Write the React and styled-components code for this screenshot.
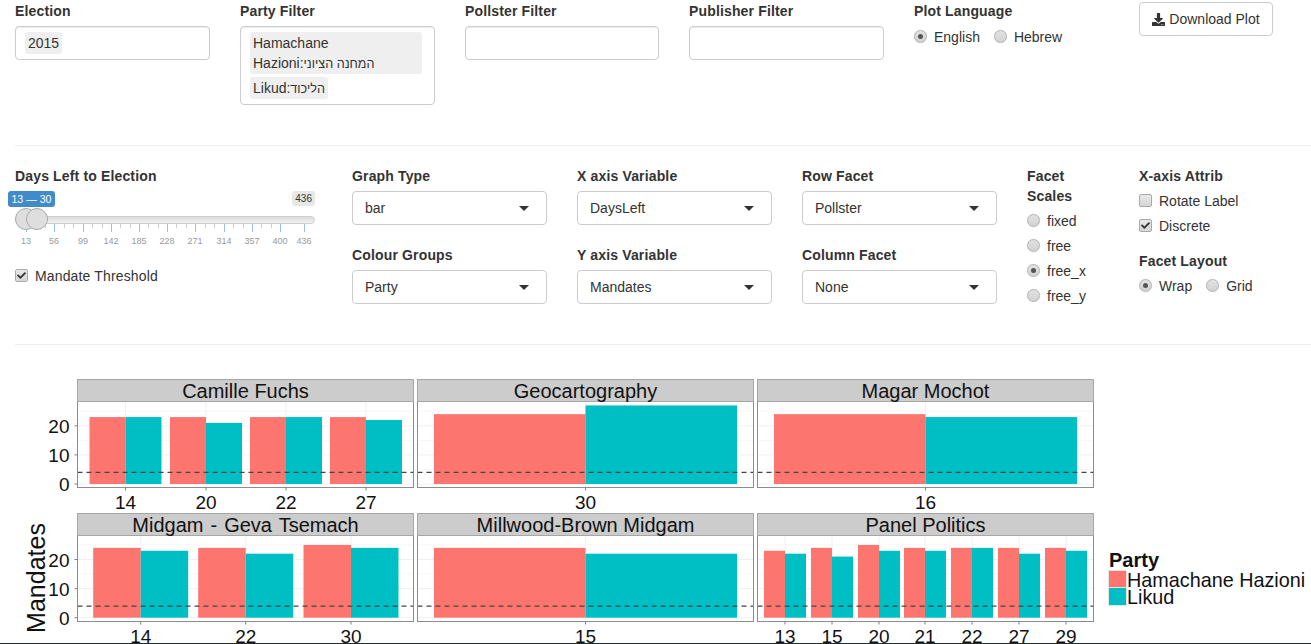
import styled, { createGlobalStyle } from "styled-components";
import { FaCheck, FaDownload } from "react-icons/fa";

const GlobalStyle = createGlobalStyle`
  html, body {
    margin: 0;
    padding: 0;
    height: 644px;
    overflow: hidden;
    background: #fff;
  }
  body {
    font-family: "Liberation Sans", Arial, "Noto Sans", sans-serif;
    font-size: 14px;
    line-height: 20px;
    color: #333;
  }
`;

const Page = styled.div`
  width: 1311px;
  height: 644px;
  overflow: hidden;
`;

const Section = styled.section`
  display: flex;
  margin-left: 15px;
  height: ${(p) => p.$height}px;
  padding-top: ${(p) => p.$top}px;
  box-sizing: border-box;
  border-bottom: 1px solid #eee;
`;

const Column = styled.div`
  flex: none;
  width: ${(p) => p.$width}px;
  display: flex;
  flex-direction: column;
`;

const Label = styled.div`
  font-weight: 700;
  font-size: 14px;
  line-height: 20px;
  letter-spacing: 0.15px;
  margin-top: ${(p) => p.$mt || 0}px;
  margin-bottom: ${(p) => p.$mb ?? 5}px;
  width: ${(p) => (p.$narrow ? "60px" : "auto")};
`;

const SelectizeBox = styled.div`
  width: ${(p) => p.$width || 195}px;
  min-height: 34px;
  box-sizing: border-box;
  padding: 5px 12px 5px 9px;
  border: 1px solid #ccc;
  border-radius: 4px;
  box-shadow: inset 0 1px 1px rgba(0, 0, 0, 0.075);
  display: flex;
  flex-direction: column;
  align-items: flex-start;
  gap: 3px;
`;

const Token = styled.div`
  background: #efefef;
  border-radius: 3px;
  padding: 1px 3px;
  line-height: 20px;
  color: #333;
  box-sizing: border-box;
  width: ${(p) => (p.$wide ? "172px" : "auto")};
`;

const Hebrew = styled.span`
  font-size: 12.6px;
  line-height: 1;
`;

const ChoiceRow = styled.div`
  display: flex;
  align-items: center;
  gap: 14px;
  height: 25px;
`;

const Choice = styled.label`
  display: flex;
  align-items: center;
  gap: 7px;
`;

const Radio = styled.span`
  width: 13px;
  height: 13px;
  box-sizing: border-box;
  border-radius: 50%;
  border: 1px solid #b5b5b5;
  background: linear-gradient(#e2e2e2, #d2d2d2);
  box-shadow: 0 0 1px rgba(0, 0, 0, 0.2);
  display: flex;
  align-items: center;
  justify-content: center;
  flex: none;
  &::after {
    content: "";
    width: 5px;
    height: 5px;
    border-radius: 50%;
    background: ${(p) => (p.$on ? "#555" : "transparent")};
  }
`;

const Check = styled.span`
  width: 13px;
  height: 13px;
  box-sizing: border-box;
  border-radius: 2px;
  border: 1px solid #aaa;
  background: linear-gradient(#e8e8e8, #d6d6d6);
  display: flex;
  align-items: center;
  justify-content: center;
  color: #333;
  font-size: 9px;
  flex: none;
`;

const DownloadButton = styled.button`
  width: 134px;
  height: 34px;
  margin-top: 1px;
  padding: 0;
  background: #fff;
  border: 1px solid #ccc;
  border-radius: 4px;
  font: inherit;
  color: #333;
  display: flex;
  align-items: center;
  justify-content: center;
  gap: 4px;
`;

const SelectBox = styled.div`
  width: 195px;
  height: 34px;
  box-sizing: border-box;
  padding: 0 12px;
  border: 1px solid #ccc;
  border-radius: 4px;
  display: flex;
  align-items: center;
  justify-content: space-between;
  margin-bottom: ${(p) => p.$mb || 0}px;
  &::after {
    content: "";
    width: 0;
    height: 0;
    border-left: 5px solid transparent;
    border-right: 5px solid transparent;
    border-top: 5px solid #333;
    margin-right: 5px;
  }
`;

const SliderWrap = styled.div`
  position: relative;
  width: 300px;
  height: 79px;
  margin-top: -1px;
`;

const FromTo = styled.span`
  position: absolute;
  left: -7px;
  top: 1px;
  width: 47px;
  height: 16px;
  text-align: center;
  background: #428bca;
  color: #fff;
  border-radius: 3px;
  font-size: 10.6px;
  line-height: 16px;
`;

const MaxTag = styled.span`
  position: absolute;
  right: 0;
  top: 1px;
  height: 15px;
  padding: 0 3px;
  background: #e8e8e8;
  color: #333;
  border-radius: 3px;
  font-size: 10px;
  line-height: 15px;
`;

const Track = styled.div`
  position: absolute;
  left: 0;
  top: 26px;
  width: 300px;
  height: 8px;
  box-sizing: border-box;
  border: 1px solid #cfcfcf;
  border-radius: 4px;
  background: linear-gradient(#dcdcdc, #f0f0f0);
`;

const Handle = styled.span`
  position: absolute;
  left: ${(p) => p.$left}px;
  top: 18px;
  width: 22px;
  height: 22px;
  box-sizing: border-box;
  border-radius: 50%;
  border: 1px solid #ababab;
  background: #dedede;
`;

const Tick = styled.span`
  position: absolute;
  top: 34px;
  width: 1px;
  height: ${(p) => (p.$major ? 8 : 4)}px;
  background: ${(p) => (p.$major ? "#9cc2e2" : "#ccc")};
`;

const TickText = styled.span`
  position: absolute;
  top: 45px;
  transform: translateX(-50%);
  font-size: 9px;
  line-height: 12px;
  color: #999;
`;

const ThresholdRow = styled(ChoiceRow)`
  position: absolute;
  left: 0;
  top: 73px;
  letter-spacing: 0.15px;
`;

const PlotBox = styled.div`
  margin-top: 25px;
  height: 274px;
  position: relative;
`;

const PlotSvg = styled.svg`
  display: block;
`;

const RED = "#fc766f";
const TEAL = "#00bfc4";
const colX = [77.5, 417.5, 757.5];
const panelW = 336;
const rows = [
  { stripTop: 379.5, panelBottom: 487.5, zero: 484 },
  { stripTop: 513.5, panelBottom: 621.5, zero: 617.7 },
];
const unit = 2.91;

const panels = [
  { title: "Camille Fuchs", col: 0, row: 0, half: 36, bars: [[125.5, "14", 23, 23], [206, "20", 23, 21], [286, "22", 23, 23], [366, "27", 23, 22]] },
  { title: "Geocartography", col: 1, row: 0, half: 151.5, bars: [[585.5, "30", 24, 27]] },
  { title: "Magar Mochot", col: 2, row: 0, half: 151.5, bars: [[925.5, "16", 24, 23]] },
  { title: "Midgam - Geva Tsemach", col: 0, row: 1, half: 47.5, wordGap: 1.5, bars: [[140.7, "14", 24, 23], [245.7, "22", 24, 22], [351, "30", 25, 24]] },
  { title: "Millwood-Brown Midgam", col: 1, row: 1, half: 151.5, bars: [[585.5, "15", 24, 22]] },
  { title: "Panel Politics", col: 2, row: 1, half: 21, bars: [[785, "13", 23, 22], [832, "15", 24, 21], [879, "20", 25, 23], [925, "21", 24, 23], [972, "22", 24, 24], [1019, "27", 24, 22], [1066, "29", 24, 23]] },
];

const tickLabels = [
  [11, "13"], [39, "56"], [68, "99"], [96, "142"], [124, "185"], [152, "228"],
  [180, "271"], [209, "314"], [237, "357"], [265, "400"], [289, "436"],
];
const minorTicks = [];
for (let i = 0; i < 9; i++) {
  for (let j = 1; j < 3; j++) {
    minorTicks.push(tickLabels[i][0] + ((tickLabels[i + 1][0] - tickLabels[i][0]) * j) / 3);
  }
}

function Panel({ p }) {
  const r = rows[p.row];
  const x = colX[p.col];
  const panelTop = r.stripTop + 22;
  const y = (v) => r.zero - v * unit;
  return (
    <g>
      <rect x={x} y={panelTop} width={panelW} height={r.panelBottom - panelTop} fill="#fff" />
      {[5, 15, 25].map((v) => (
        <line key={v} x1={x} x2={x + panelW} y1={y(v)} y2={y(v)} stroke="#f7f7f7" />
      ))}
      {[0, 10, 20].map((v) => (
        <line key={v} x1={x} x2={x + panelW} y1={y(v)} y2={y(v)} stroke="#f0f0f0" />
      ))}
      {p.bars.map(([c]) => (
        <line key={c} x1={c} x2={c} y1={panelTop} y2={r.panelBottom} stroke="#f0f0f0" />
      ))}
      {p.bars.map(([c, , a, b]) => (
        <g key={c}>
          <rect x={c - p.half} y={y(a)} width={p.half} height={a * unit} fill={RED} />
          <rect x={c} y={y(b)} width={p.half} height={b * unit} fill={TEAL} />
        </g>
      ))}
      <line x1={x} x2={x + panelW} y1={y(4)} y2={y(4)} stroke="#444" strokeWidth="1.3" strokeDasharray="5 4" />
      <rect x={x} y={panelTop} width={panelW} height={r.panelBottom - panelTop} fill="none" stroke="#8c8c8c" />
      <rect x={x} y={r.stripTop} width={panelW} height="22" fill="#cccccc" stroke="#a6a6a6" />
      <text x={x + panelW / 2} y={r.stripTop + 18} textAnchor="middle" fontSize="20" wordSpacing={p.wordGap} fill="#111">
        {p.title}
      </text>
      {p.bars.map(([c, label]) => (
        <g key={c}>
          <line x1={c} x2={c} y1={r.panelBottom} y2={r.panelBottom + 3} stroke="#7f7f7f" />
          <text x={c} y={r.panelBottom + 21.5} textAnchor="middle" fontSize="19" fill="#111">
            {label}
          </text>
        </g>
      ))}
      {p.col === 0 &&
        [0, 10, 20].map((v) => (
          <g key={v}>
            <line x1={x - 3} x2={x} y1={y(v)} y2={y(v)} stroke="#7f7f7f" />
            <text x={x - 8} y={y(v) + 7} textAnchor="end" fontSize="19" fill="#111">
              {v}
            </text>
          </g>
        ))}
    </g>
  );
}

function Plot() {
  return (
    <PlotSvg width="1311" height="274" viewBox="0 370 1311 274" fontFamily="'Liberation Sans', Arial, sans-serif">
      {panels.map((p) => (
        <Panel key={p.title} p={p} />
      ))}
      <text transform="translate(45 578) rotate(-90)" textAnchor="middle" fontSize="25" fill="#111">
        Mandates
      </text>
      <text x="1109" y="567" fontSize="20" fontWeight="700" fill="#111">
        Party
      </text>
      <rect x="1108.5" y="570.5" width="18" height="17" fill={RED} stroke="#e4e4e4" />
      <rect x="1108.5" y="587.5" width="18" height="18" fill={TEAL} stroke="#e4e4e4" />
      <text x="1127" y="587" fontSize="19.8" fill="#111">
        Hamachane Hazioni
      </text>
      <text x="1127" y="604" fontSize="19.8" fill="#111">
        Likud
      </text>
      <rect x="0" y="643" width="1311" height="1" fill="#1f2d33" />
    </PlotSvg>
  );
}

function App() {
  return (
    <Page>
      <GlobalStyle />
      <Section $height={146} $top={1}>
        <Column $width={225}>
          <Label>Election</Label>
          <SelectizeBox>
            <Token>2015</Token>
          </SelectizeBox>
        </Column>
        <Column $width={225}>
          <Label>Party Filter</Label>
          <SelectizeBox>
            <Token $wide>Hamachane Hazioni:<Hebrew>המחנה הציוני</Hebrew></Token>
            <Token>Likud:<Hebrew>הליכוד</Hebrew></Token>
          </SelectizeBox>
        </Column>
        <Column $width={224}>
          <Label>Pollster Filter</Label>
          <SelectizeBox $width={194} />
        </Column>
        <Column $width={225}>
          <Label>Publisher Filter</Label>
          <SelectizeBox />
        </Column>
        <Column $width={225}>
          <Label $mb={3}>Plot Language</Label>
          <ChoiceRow>
            <Choice><Radio $on />English</Choice>
            <Choice><Radio />Hebrew</Choice>
          </ChoiceRow>
        </Column>
        <Column $width={134}>
          <DownloadButton><FaDownload size={13} />Download Plot</DownloadButton>
        </Column>
      </Section>
      <Section $height={199} $top={20}>
        <Column $width={337}>
          <Label>Days Left to Election</Label>
          <SliderWrap>
            <FromTo>13 — 30</FromTo>
            <MaxTag>436</MaxTag>
            <Track />
            {minorTicks.map((x) => (
              <Tick key={x} style={{ left: x }} />
            ))}
            {tickLabels.map(([x, text]) => (
              <Tick key={text} $major style={{ left: x }} />
            ))}
            {tickLabels.map(([x, text]) => (
              <TickText key={text} style={{ left: x }}>{text}</TickText>
            ))}
            <Handle $left={0} />
            <Handle $left={11} />
            <ThresholdRow>
              <Choice><Check><FaCheck /></Check>Mandate Threshold</Choice>
            </ThresholdRow>
          </SliderWrap>
        </Column>
        <Column $width={225}>
          <Label>Graph Type</Label>
          <SelectBox $mb={20}>bar</SelectBox>
          <Label>Colour Groups</Label>
          <SelectBox>Party</SelectBox>
        </Column>
        <Column $width={225}>
          <Label>X axis Variable</Label>
          <SelectBox $mb={20}>DaysLeft</SelectBox>
          <Label>Y axis Variable</Label>
          <SelectBox>Mandates</SelectBox>
        </Column>
        <Column $width={225}>
          <Label>Row Facet</Label>
          <SelectBox $mb={20}>Pollster</SelectBox>
          <Label>Column Facet</Label>
          <SelectBox>None</SelectBox>
        </Column>
        <Column $width={112}>
          <Label $narrow $mb={2}>Facet Scales</Label>
          <ChoiceRow><Choice><Radio />fixed</Choice></ChoiceRow>
          <ChoiceRow><Choice><Radio />free</Choice></ChoiceRow>
          <ChoiceRow><Choice><Radio $on />free_x</Choice></ChoiceRow>
          <ChoiceRow><Choice><Radio />free_y</Choice></ChoiceRow>
        </Column>
        <Column $width={170}>
          <Label $mb={2}>X-axis Attrib</Label>
          <ChoiceRow><Choice><Check />Rotate Label</Choice></ChoiceRow>
          <ChoiceRow><Choice><Check><FaCheck /></Check>Discrete</Choice></ChoiceRow>
          <Label $mt={13} $mb={2}>Facet Layout</Label>
          <ChoiceRow><Choice><Radio $on />Wrap</Choice><Choice><Radio />Grid</Choice></ChoiceRow>
        </Column>
      </Section>
      <PlotBox>
        <Plot />
      </PlotBox>
    </Page>
  );
}

export default App;
